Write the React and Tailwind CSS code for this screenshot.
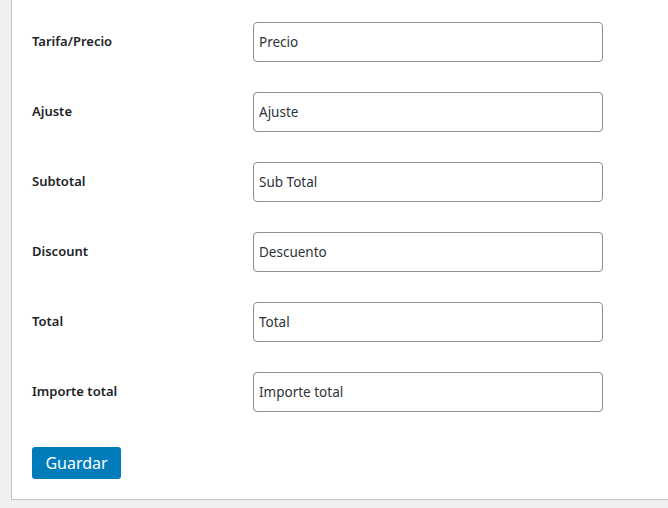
const fields = [
  { label: 'Tarifa/Precio', placeholder: 'Precio' },
  { label: 'Ajuste', placeholder: 'Ajuste' },
  { label: 'Subtotal', placeholder: 'Sub Total' },
  { label: 'Discount', placeholder: 'Descuento' },
  { label: 'Total', placeholder: 'Total' },
  { label: 'Importe total', placeholder: 'Importe total' },
]

function FieldRow({ label, placeholder }) {
  return (
    <div className="flex items-center h-[70px]">
      <label className="w-[221px] shrink-0 text-[13px] font-semibold text-[#1d2327]">{label}</label>
      <input
        type="text"
        placeholder={placeholder}
        className="w-[350px] h-10 px-[5px] rounded border border-[#8c8f94] bg-white text-[13.5px] text-[#2c3338] placeholder:text-[#2c3338] outline-none"
      />
    </div>
  )
}

export default function App() {
  return (
    <div
      className="h-[508px] w-[668px] overflow-hidden bg-[#f0f0f1] pl-[11px]"
      style={{ fontFamily: '"Noto Sans", "Open Sans", sans-serif' }}
    >
      <div className="h-[500px] w-[700px] bg-white border-l border-b border-[#c3c4c7] pl-5 pt-[7px]">
        {fields.map((f) => (
          <FieldRow key={f.label} {...f} />
        ))}
        <button
          type="button"
          className="mt-5 w-[89px] h-8 rounded-[3px] bg-[#007cba] text-white text-base flex items-center justify-center"
        >
          Guardar
        </button>
      </div>
    </div>
  )
}
